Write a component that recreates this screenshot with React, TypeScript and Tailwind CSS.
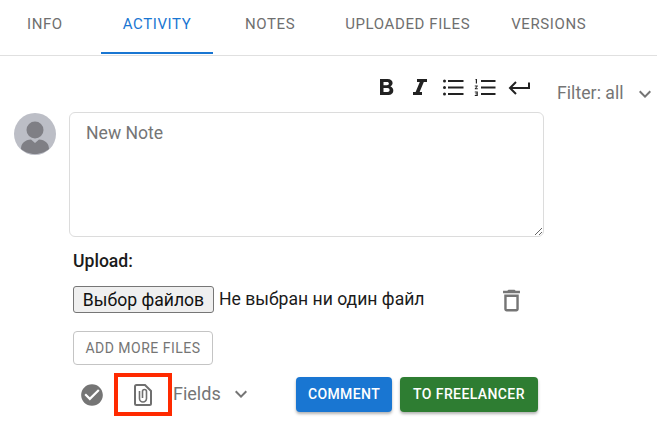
const Chev = ({ c }: { c: string }) => (
  <svg viewBox="0 0 24 24" className={c} fill="#757575"><path d="M16.59 8.59L12 13.17 7.41 8.59 6 10l6 6 6-6z" /></svg>
);
export default function App() {
  return (
    <div className="w-[657px] h-[426px] bg-white overflow-hidden font-['Roboto',sans-serif] text-[#757575]">
      <div className="h-[56px] border-b border-[#e0e0e0] flex text-[15px] leading-[20px] tracking-[0.6px] text-[#6f6f6f]">
        <div className="w-[101px] pl-[27px] pt-[14px]">INFO</div>
        <div className="w-[112px] h-[54px] text-center pt-[14px] text-[#1976d2] border-b-2 border-[#1976d2]">ACTIVITY</div>
        <div className="ml-[32px] pt-[14px]">NOTES</div>
        <div className="ml-[50px] pt-[14px]">UPLOADED FILES</div>
        <div className="ml-[41px] pt-[14px]">VERSIONS</div>
      </div>
      <div className="relative h-[56px]">
        <div className="flex items-center h-[24px] pt-[19px] ml-[376px] box-content">
          <svg viewBox="0 0 20 24" className="w-[20px] h-[24px]" fill="#222"><path d="M4 4h7.600c3.200 0 5 1.700 5 4.100 0 1.600-.9 2.800-2.200 3.400 1.700.5 2.900 1.900 2.900 3.900 0 2.800-2.100 4.600-5.500 4.600H4V4zm3.500 2.900v3.300h3.500c1.200 0 1.900-.6 1.900-1.700S12.200 6.900 11 6.900H7.500zm0 6.100v4h4c1.300 0 2.100-.8 2.100-2s-.8-2-2.100-2h-4z" /></svg>
          <svg viewBox="0 0 20 24" className="w-[20px] h-[24px] ml-[13px]" fill="#222"><path d="M8 4h10v3h-3.200L10.600 17H13v3H4v-3h2.600L10.800 7H8z" /></svg>
          <svg viewBox="0 0 22 24" className="w-[22px] h-[24px] ml-[13px]" fill="#222"><circle cx="2.500" cy="6" r="1.500" /><circle cx="2.500" cy="12.500" r="1.500" /><circle cx="2.500" cy="19" r="1.500" /><path d="M6 5h15.500v2H6zM6 11.500h15.500v2H6zM6 18h15.500v2H6z" /></svg>
          <svg viewBox="0 0 22 24" className="w-[22px] h-[24px] ml-[10px]" fill="#222"><path d="M7 5h14.500v2H7zM7 11.500h14.500v2H7zM7 18h14.500v2H7zM1.500 4H3v4.500H1.800V5h-.3zM.8 10.500h3v.8l-1.800 2h1.800v.9h-3v-.8l1.800-2H.8zM.8 16.500h3V21h-3v-.9h1.800v-.9H1.200v-.8h1.400v-.9H.8z" /></svg>
          <svg viewBox="0 0 22 24" className="w-[22px] h-[24px] ml-[12px]" fill="none" stroke="#222" strokeWidth="2"><path d="M21 7.500V13H2M8 7l-6 6 6 6" /></svg>
        </div>
        <div className="absolute left-[557px] top-[27px] text-[17.6px] leading-[20px] tracking-[0.05px] text-[#757575]">Filter: all</div>
        <Chev c="absolute left-[633px] top-[26px] w-[24px] h-[24px]" />
      </div>
      <div className="flex items-start pl-[14px]">
        <svg viewBox="0 0 42 42" className="w-[42px] h-[42px] mt-px shrink-0">
          <circle cx="21" cy="21" r="21" fill="#bcbec6" />
          <circle cx="21" cy="17" r="8.500" fill="#7f7f85" />
          <path d="M7 36c0-6 4-9 10-9.500l4 3.500 4-3.500c6 .5 10 3.500 10 9.500-3 2.500-8 5-14 5s-11-2.500-14-5z" fill="#7f7f85" />
        </svg>
        <div className="ml-[13px] w-[475px]">
          <textarea placeholder="New Note" className="block w-[475px] h-[125px] border border-[#dcdcdc] rounded-[6px] px-[16px] py-[9px] text-[17.6px] leading-[22px] placeholder:text-[#757575] outline-none" />
          <div className="ml-[4px] mt-[14px] text-[17.6px] leading-[20px] font-medium text-[#1b1b1b]">Upload:</div>
          <div className="ml-[4px] mt-[15px] flex items-center h-[27px]">
            <button className="w-[141px] h-[27px] bg-[#efefef] border border-[#767676] rounded-[3px] text-[17.6px] text-[#111] leading-[20px]">Выбор файлов</button>
            <span className="ml-[5px] text-[17.6px] text-[#1b1b1b]">Не выбран ни один файл</span>
            <svg viewBox="0 0 24 24" className="absolute left-[497px] top-[286px] w-[29px] h-[29px]" fill="#757575"><path d="M6 19c0 1.100.9 2 2 2h8c1.100 0 2-.9 2-2V7H6v12zM8 9h8v10H8V9zm7.500-5l-1-1h-5l-1 1H5v2h14V4z" /></svg>
          </div>
          <button className="ml-[4px] mt-[18px] block w-[140px] h-[34px] border border-[#c4c4c4] rounded-[4px] text-[14px] tracking-[0.5px] text-[#757575]">ADD MORE FILES</button>
          <div className="relative flex items-center mt-[12px] h-[35px]">
            <svg viewBox="0 0 24 24" className="ml-[10px] w-[26px] h-[26px] shrink-0" fill="#757575"><path d="M12 2C6.480 2 2 6.480 2 12s4.480 10 10 10 10-4.480 10-10S17.520 2 12 2zm-2 15l-5-5 1.410-1.410L10 14.170l7.590-7.590L19 8l-9 9z" /></svg>
            <div className="absolute left-[45px] top-[-4px] w-[58px] h-[43px] border-[4px] border-[#ff2a00] flex items-center justify-center">
              <svg viewBox="0 0 18 22" className="w-[18px] h-[22px]" fill="none" stroke="#6f6f6f" strokeWidth="2">
                <path d="M2.500 1H11l6 6v12.500a1.500 1.500 0 0 1-1.500 1.500h-13A1.500 1.500 0 0 1 1 19.500v-17A1.500 1.500 0 0 1 2.500 1z" />
                <path d="M5.500 7v7.500a3.500 3.500 0 0 0 7 0V7.500a2 2 0 0 0-4 0V14" strokeWidth="1.600" />
              </svg>
            </div>
            <span className="absolute left-[104px] top-[6px] text-[18px] leading-[22px] text-[#757575]">Fields</span>
            <Chev c="absolute left-[160px] top-[5px] w-[24px] h-[24px]" />
            <button className="absolute left-[227px] w-[96px] h-[35px] rounded-[4px] bg-[#1976d2] text-white text-[14px] font-medium tracking-[0.4px] shadow-[0_2px_3px_rgba(0,0,0,0.3)]">COMMENT</button>
            <button className="absolute left-[331px] w-[138px] h-[35px] rounded-[4px] bg-[#2e7d32] text-white text-[14px] font-medium tracking-[0.4px] shadow-[0_2px_3px_rgba(0,0,0,0.3)]">TO FREELANCER</button>
          </div>
        </div>
      </div>
    </div>
  );
}
